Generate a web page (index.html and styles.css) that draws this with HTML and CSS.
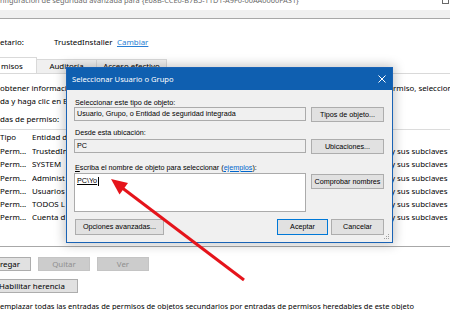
FILE: index.html
```html
<!DOCTYPE html>
<html lang="es">
<head>
<meta charset="utf-8">
<title>Seleccionar Usuario o Grupo</title>
<link rel="stylesheet" href="styles.css">
</head>
<body>
<div class="win">
  <div class="wtitle">
    <span class="wtitle-text">nfiguración de seguridad avanzada para {E68B-CCE0-B7B5-11D1-A9F0-00AA0060FA31}</span>
    <span class="maxbox"></span>
  </div>
  <div class="band"></div>
  <div class="owner">
    <span class="own-l">etario:</span>
    <span class="own-v">TrustedInstaller</span>
    <span class="link">Cambiar</span>
  </div>
  <div class="tabs">
    <div class="tab tab-sel">misos</div>
    <div class="tab tab-aud">Auditoría</div>
    <div class="tab tab-acc">Acceso efectivo</div>
  </div>
  <div class="panel">
    <div class="info"><span class="clip">obtener informació</span><span></span><span>rmiso, seleccione</span></div>
    <div class="info"><span class="clip">da y haga clic en E</span><span></span><span></span></div>
    <div class="cap">das de permiso:</div>
    <div class="list">
      <div class="lrow lhead"><span>Tipo</span><span>Entidad d</span><span></span><span></span></div>
      <div class="lrow"><span>Perm...</span><span>TrustedIn</span><span></span><span>y sus subclaves</span></div>
      <div class="lrow"><span>Perm...</span><span>SYSTEM</span><span></span><span>y sus subclaves</span></div>
      <div class="lrow"><span>Perm...</span><span>Administ</span><span></span><span>y sus subclaves</span></div>
      <div class="lrow"><span>Perm...</span><span>Usuarios</span><span></span><span>y sus subclaves</span></div>
      <div class="lrow"><span>Perm...</span><span>TODOS L</span><span></span><span>y sus subclaves</span></div>
      <div class="lrow"><span>Perm...</span><span>Cuenta d</span><span></span><span>y sus subclaves</span></div>
    </div>
    <div class="btns">
      <div class="wbtn b-add">Agregar</div>
      <div class="wbtn wbtn-dis">Quitar</div>
      <div class="wbtn wbtn-dis">Ver</div>
    </div>
    <div class="wbtn b-inh">Habilitar herencia</div>
    <div class="bottomtext">emplazar todas las entradas de permisos de objetos secundarios por entradas de permisos heredables de este objeto</div>
  </div>
</div>

<div class="dlg">
  <div class="dlg-title">
    <span>Seleccionar Usuario o Grupo</span>
    <svg class="xicon" width="8" height="8" viewBox="0 0 8 8"><path d="M0.5 0.5L7.5 7.5M7.5 0.5L0.5 7.5" stroke="#fff" stroke-width="1"/></svg>
  </div>
  <div class="dlg-body">
    <div class="dl">Seleccionar este tipo de objeto:</div>
    <div class="drow">
      <div class="field">Usuario, Grupo, o Entidad de seguridad integrada</div>
      <div class="dbtn">Tipos de objeto...</div>
    </div>
    <div class="dl dl2">Desde esta ubicación:</div>
    <div class="drow drow2">
      <div class="field">PC</div>
      <div class="dbtn">Ubicaciones...</div>
    </div>
    <div class="dl dl3"><span class="u">E</span>scriba el nombre de objeto para seleccionar (<span class="dlink">ejemplos</span>):</div>
    <div class="drow drow3">
      <div class="field field-big"><span class="u">PC\Yo</span><span class="caret"></span></div>
      <div class="dbtn dbtn3">Comprobar nombres</div>
    </div>
    <div class="drow drow4">
      <div class="dbtn dbtn-adv">Opciones avanzadas...</div>
      <div class="okcancel">
        <div class="dbtn dbtn-ok">Aceptar</div>
        <div class="dbtn dbtn-cancel">Cancelar</div>
      </div>
    </div>
  </div>
  <svg class="grip" width="6" height="6" viewBox="0 0 6 6"><rect x="4" y="0" width="1" height="1" fill="#a0a0a0"/><rect x="2" y="2" width="1" height="1" fill="#a0a0a0"/><rect x="4" y="2" width="1" height="1" fill="#a0a0a0"/><rect x="0" y="4" width="1" height="1" fill="#a0a0a0"/><rect x="2" y="4" width="1" height="1" fill="#a0a0a0"/><rect x="4" y="4" width="1" height="1" fill="#a0a0a0"/></svg>
</div>

<svg class="arrow" width="450" height="310" viewBox="0 0 450 310">
  <line x1="244" y1="280" x2="121" y2="187" stroke="#e5141b" stroke-width="3"/>
  <polygon points="111,179 128,183 119.5,194.5" fill="#e5141b"/>
</svg>
</body>
</html>
```

FILE: styles.css
```css
* { box-sizing: border-box; }
html, body {
  margin: 0;
  width: 450px;
  height: 310px;
  overflow: hidden;
  background: #fff;
}
body {
  position: relative;
  font-family: "Noto Sans", sans-serif;
  font-size: 7.9px;
  color: #000;
}
.win {
  width: 450px;
  overflow: hidden;
}

.wtitle {
  height: 10px;
  display: flex;
  justify-content: space-between;
  color: #6a6a6a;
  font-size: 7.4px;
  white-space: nowrap;
}
.wtitle-text {
  display: block;
  line-height: 10px;
  margin-top: -5px;
}
.maxbox {
  width: 7px;
  height: 9px;
  border: 1px solid #6a6a6a;
  margin-top: -5px;
  margin-right: 1px;
}
.band {
  height: 9px;
  background: #f0f0f0;
  border-bottom: 1px solid #a8a8a8;
}

.owner {
  margin-top: 18px;
  height: 10px;
  line-height: 10px;
  display: flex;
  white-space: nowrap;
}
.own-l { width: 54px; }
.own-v { width: 63px; }
.link { color: #2a7fd4; text-decoration: underline; }

.tabs {
  margin-top: 10px;
  height: 16px;
  display: flex;
  align-items: flex-end;
  white-space: nowrap;
}
.tab {
  height: 14px;
  line-height: 13px;
  background: #f0f0f0;
  border: 1px solid #d9d9d9;
  border-bottom: none;
  text-align: center;
}
.tab-sel {
  height: 16px;
  line-height: 17px;
  width: 38px;
  margin-left: -1px;
  padding-left: 1px;
  text-align: left;
  background: #fff;
}
.tab-aud { width: 61px; margin-left: -1px; }
.tab-acc { width: 71px; margin-left: -1px; }

.panel {
  border-top: 1px solid #d9d9d9;
  padding-top: 8px;
}
.info {
  display: grid;
  grid-template-columns: 66px 327px 1fr;
  line-height: 13px;
  height: 13px;
  white-space: nowrap;
}
.clip { overflow: hidden; }
.cap {
  margin-top: 4.5px;
  line-height: 13px;
  height: 13px;
}
.list {
  margin-top: 3.5px;
  height: 118px;
  border-top: 1px solid #dcdcdc;
  border-bottom: 1px solid #a8a8a8;
}
.lrow {
  display: grid;
  grid-template-columns: 32px 34px 325px 1fr;
  height: 13.3px;
  line-height: 13.3px;
  white-space: nowrap;
}
.lrow span { overflow: hidden; }
.lhead {
  height: 15px;
  line-height: 15px;
}

.btns {
  margin-top: 10px;
  display: flex;
  gap: 7px;
}
.wbtn {
  height: 14px;
  line-height: 12px;
  background: #e1e1e1;
  border: 1px solid #adadad;
  text-align: center;
  white-space: nowrap;
}
.b-add { width: 52px; margin-left: -21px; }
.wbtn-dis {
  width: 52px;
  background: #cccccc;
  border-color: #c4c4c4;
  color: #8f8f8f;
}
.b-inh {
  margin-top: 8px;
  width: 87px;
  margin-left: -9px;
  padding-left: 7px;
  text-align: left;
}
.bottomtext {
  margin-top: 7px;
  font-size: 7.5px;
  line-height: 12px;
  white-space: nowrap;
}

/* dialog */
.dlg {
  position: absolute;
  left: 66px;
  top: 67px;
  width: 327px;
  height: 176px;
  border: 1px solid #1a63b5;
  background: #f0f0f0;
  box-shadow: 0 0 10px 2px rgba(0, 0, 0, 0.22);
  font-family: "Liberation Sans", Arial, sans-serif;
  font-size: 7.2px;
  color: #000;
  z-index: 2;
}
.dlg-title {
  height: 22px;
  background: #0f5fb0;
  color: #fff;
  font-family: "Noto Sans", sans-serif;
  font-size: 7.6px;
  display: flex;
  align-items: center;
  justify-content: space-between;
  padding: 0 6px 0 5px;
}
.xicon { display: block; }
.dlg-body {
  padding: 8px 8px 0 7px;
}
.dl {
  height: 9px;
  line-height: 9px;
  padding-left: 1px;
  white-space: nowrap;
}
.dl2 { margin-top: 6px; }
.dl3 { margin-top: 8.5px; }
.drow {
  display: flex;
  justify-content: space-between;
  align-items: flex-start;
}
.drow2 { margin-top: 2px; }
.drow3 { margin-top: 1.5px; }
.drow4 { margin-top: 7px; }
.field {
  width: 232px;
  height: 14px;
  border: 1px solid #ababab;
  background: #f0f0f0;
  line-height: 12px;
  padding-left: 2px;
  white-space: nowrap;
}
.field-big {
  height: 39px;
  background: #fff;
  padding-top: 1px;
  display: flex;
  align-items: flex-start;
}
.caret {
  width: 1px;
  height: 9px;
  margin-top: 2px;
  margin-left: 1px;
  background: #000;
}
.u { text-decoration: underline; }
.dlink { color: #0066cc; text-decoration: underline; }
.dbtn {
  width: 73px;
  height: 15px;
  background: #e1e1e1;
  border: 1px solid #adadad;
  text-align: center;
  line-height: 13px;
  white-space: nowrap;
}
.dbtn3 { margin-top: 1px; }
.dbtn-adv {
  width: 89px;
  height: 16px;
  line-height: 14px;
  margin-left: 1px;
}
.okcancel {
  display: flex;
  gap: 3px;
}
.dbtn-ok {
  width: 51px;
  height: 16px;
  line-height: 14px;
  border-color: #0078d7;
}
.dbtn-cancel {
  width: 53px;
  height: 16px;
  line-height: 14px;
}
.grip {
  position: absolute;
  right: 2px;
  bottom: 2px;
}

.arrow {
  position: absolute;
  left: 0;
  top: 0;
  z-index: 3;
  pointer-events: none;
}
```
